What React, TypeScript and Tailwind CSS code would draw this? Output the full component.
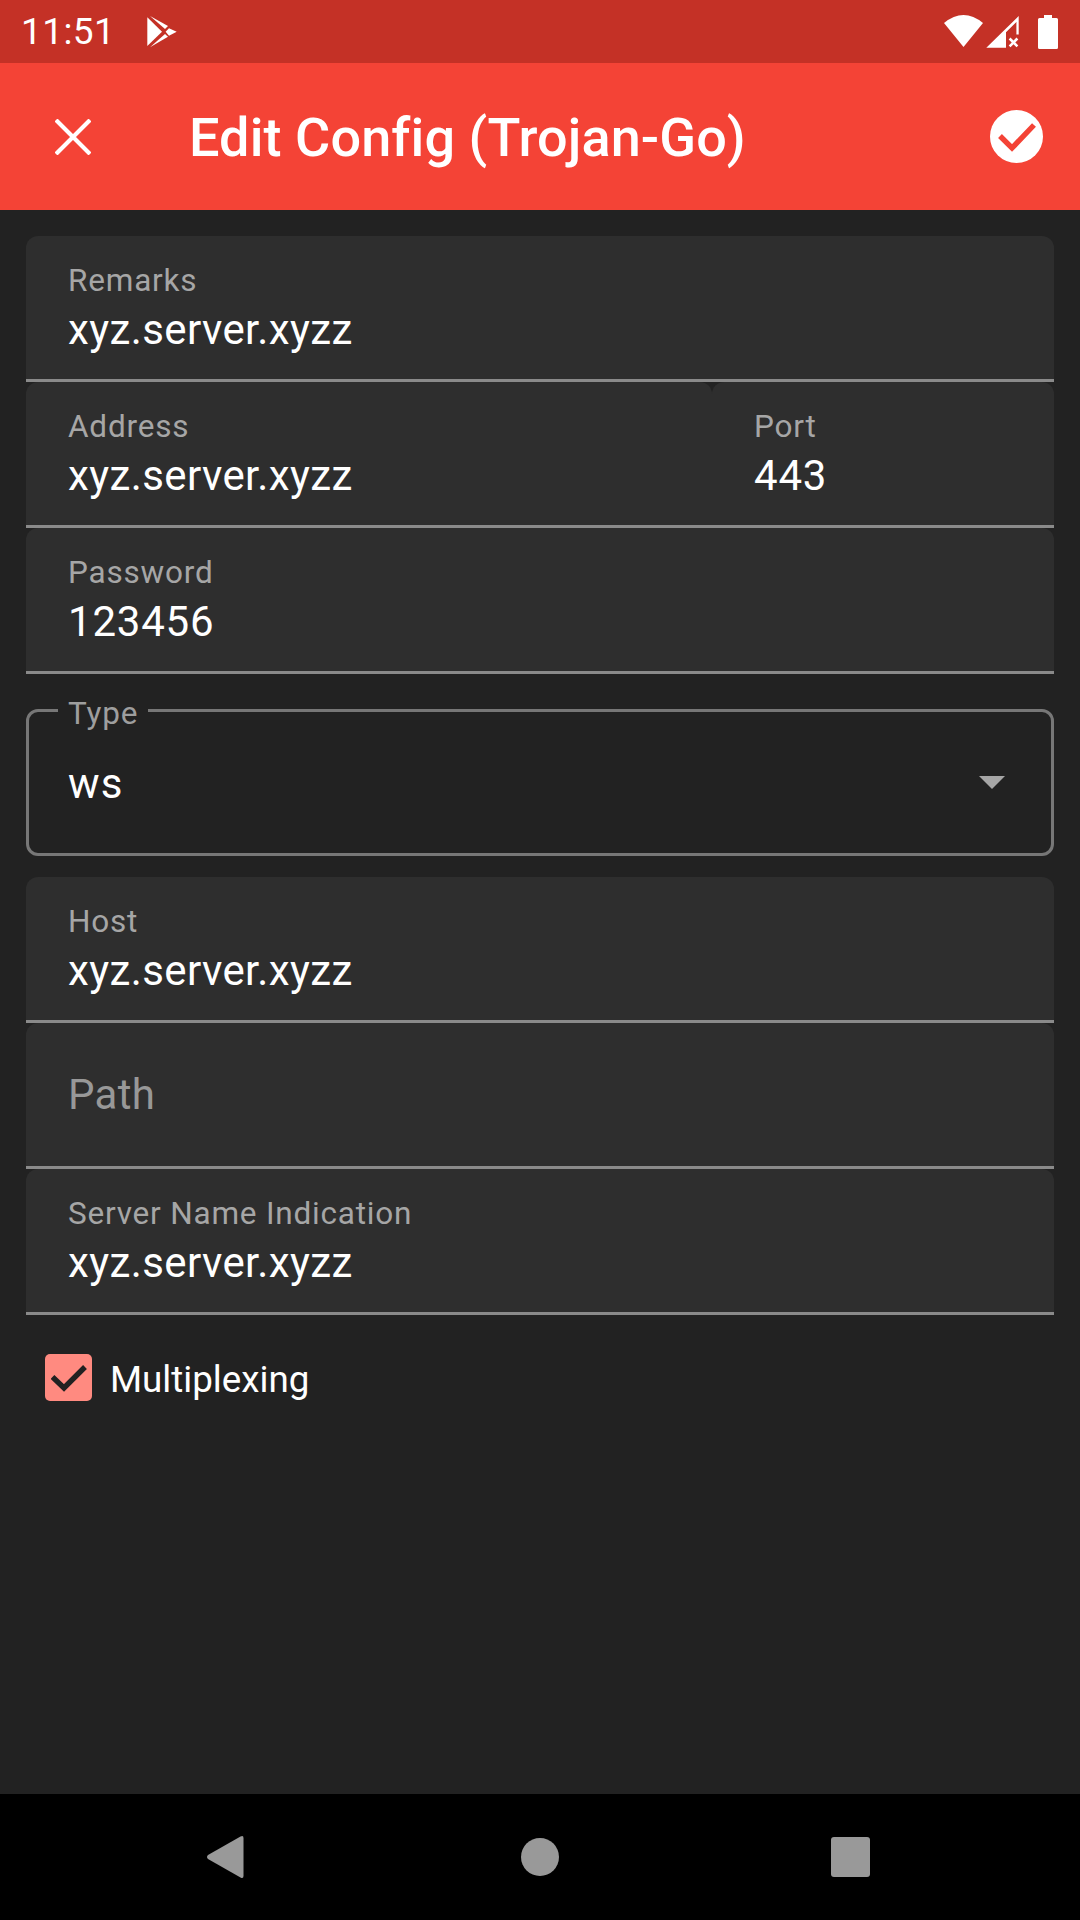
const font = "font-['Roboto',sans-serif]";

function Field({ label, value, digits = false, className = "" }: { label: string; value: string; digits?: boolean; className?: string }) {
  return (
    <div className={`h-[146px] bg-[#2e2e2e] rounded-t-[12px] border-b-[3px] border-[#8a8a8a] pl-[42px] pt-[27px] flex flex-col ${className}`}>
      <div className="text-[31.5px] leading-[36px] text-[#a6a6a6] tracking-[0.8px]">{label}</div>
      <div className={`text-[42px] leading-[50px] text-white mt-[6px] ${digits ? "tracking-[0.8px]" : "tracking-[0.4px]"}`}>{value}</div>
    </div>
  );
}

export default function App() {
  return (
    <div className={`w-[1080px] h-[1920px] flex flex-col bg-[#222222] overflow-hidden ${font}`}>
      {/* status bar */}
      <div className="h-[63px] shrink-0 bg-[#c43126] flex items-center pl-[21px] pr-[21px] text-white">
        <span className="text-[37px] leading-[63px] tracking-[0.4px]">11:51</span>
        <svg className="ml-[32px]" width="31" height="34" viewBox="142 15 31 34" fill="#fff">
          <path d="M142.3 17.3V46L157 31.7Z" />
          <path d="M145 16L163 26L160 29Z" />
          <path d="M145 47.3L163 36.7L160 34Z" />
          <path d="M160.6 31.7L164 28.3L171.7 31.7L164 35.7Z" />
        </svg>
        <svg className="ml-auto" width="116" height="36" viewBox="944 13 116 36" fill="#fff">
          <path d="M945 22Q964.5 6 984 22L964.5 46Z" />
          <path fillRule="evenodd" d="M987.3 46.7L1019.7 15V33.5H1007V46.7ZM1007 33.5H1017.4V21L1007 31.3Z" />
          <path d="M1011.5 36.6L1014.5 39.6L1017.5 36.6L1019.3 38.4L1016.3 41.4L1019.3 44.4L1017.5 46.2L1014.5 43.2L1011.5 46.2L1009.7 44.4L1012.7 41.4L1009.7 38.4Z" />
          <path d="M1045 14H1053V17H1057.5Q1059 17 1059 18.5V46.5Q1059 48 1057.5 48H1040.5Q1039 48 1039 46.5V18.5Q1039 17 1040.5 17H1045Z" />
        </svg>
      </div>

      {/* toolbar */}
      <div className="h-[147px] shrink-0 bg-[#f44336] flex items-center text-white">
        <svg className="ml-[55px]" width="36" height="36" viewBox="0 0 36 36" fill="none" stroke="#fff" strokeWidth="4.2">
          <path d="M1 1L35 35M35 1L1 35" />
        </svg>
        <div className="ml-[98px] mt-[2px] text-[54px] leading-[60px] font-medium tracking-[0.1px]">Edit Config (Trojan-Go)</div>
        <svg className="ml-auto mr-[37px]" width="53" height="53" viewBox="0 0 53 53">
          <circle cx="26.5" cy="26.5" r="26.5" fill="#fff" />
          <path d="M10 26L22 38L44 15" fill="none" stroke="#f44336" strokeWidth="5.4" />
        </svg>
      </div>

      {/* form */}
      <div className="flex-1 flex flex-col px-[26px] pt-[26px]">
        <Field label="Remarks" value="xyz.server.xyzz" />
        <div className="flex">
          <Field label="Address" value="xyz.server.xyzz" className="w-[686px]" />
          <Field label="Port" value="443" digits className="flex-1" />
        </div>
        <Field label="Password" value="123456" digits />

        <div className="relative mt-[35px] h-[147px] rounded-[12px] border-[3px] border-[#777777] flex items-center justify-between pl-[39px] pr-[46px]">
          <div className="absolute left-[29px] top-[-16px] h-[34px] px-[10px] bg-[#222222] text-[31.5px] leading-[36px] text-[#9e9e9e] tracking-[0.8px]">Type</div>
          <div className="text-[42px] leading-[50px] text-white tracking-[1.2px] mt-[2px]">ws</div>
          <svg width="26" height="13" viewBox="0 0 26 13" fill="#a6a6a6">
            <path d="M0 0H26L13 13Z" />
          </svg>
        </div>

        <div className="mt-[21px] flex flex-col">
          <Field label="Host" value="xyz.server.xyzz" />
          <div className="h-[146px] bg-[#2e2e2e] rounded-t-[12px] border-b-[3px] border-[#8a8a8a] pl-[42px] flex items-center text-[42px] leading-[50px] text-[#989898] tracking-[0.3px]">Path</div>
          <Field label="Server Name Indication" value="xyz.server.xyzz" />
        </div>

        <div className="mt-[39px] ml-[19px] flex items-start">
          <div className="w-[47px] h-[47px] rounded-[5px] bg-[#ff8a80] flex items-center justify-center">
            <svg width="36" height="28" viewBox="0 0 36 28" fill="none" stroke="#212121" strokeWidth="5.4">
              <path d="M1.5 13L13 24L34 3" />
            </svg>
          </div>
          <div className="ml-[18px] mt-[2px] text-[36.75px] leading-[48px] text-white">Multiplexing</div>
        </div>
      </div>

      {/* navigation */}
      <div className="h-[126px] shrink-0 bg-black flex items-center pl-[207px]">
        <svg width="37" height="42" viewBox="0 0 37 42" fill="#999999">
          <path d="M33.5 0.5Q36.5 -1 36.5 2V40Q36.5 43 33.5 41.5L1 23Q-1 21 1 19Z" />
        </svg>
        <div className="ml-[277px] w-[38px] h-[38px] rounded-full bg-[#999999]" />
        <div className="ml-[272px] w-[39px] h-[40px] rounded-[3px] bg-[#999999]" />
      </div>
    </div>
  );
}
